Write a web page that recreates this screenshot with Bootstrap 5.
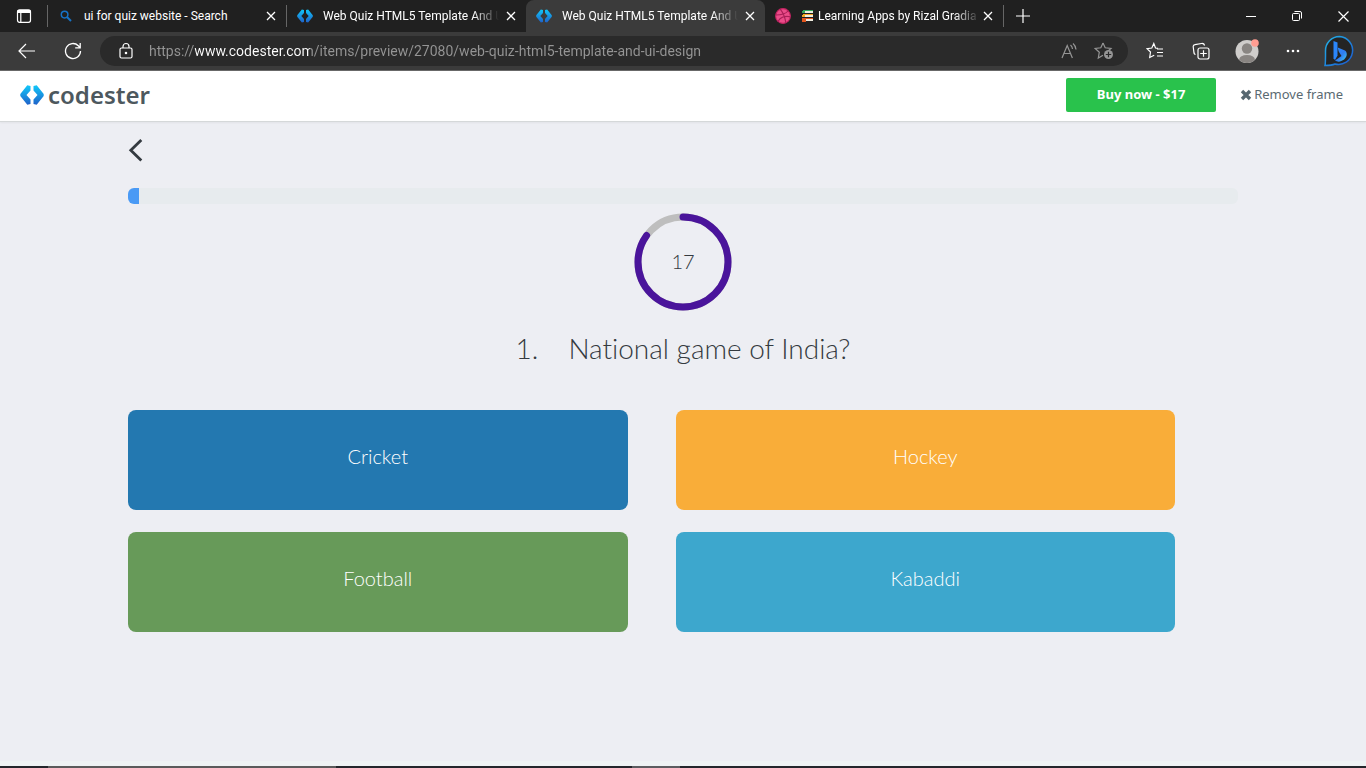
<!DOCTYPE html>
<html lang="en">
<head>
<meta charset="utf-8">
<meta name="viewport" content="width=device-width, initial-scale=1">
<title>Web Quiz HTML5 Template And UI Design</title>
<link href="https://cdn.jsdelivr.net/npm/bootstrap@5.3.0/dist/css/bootstrap.min.css" rel="stylesheet">
<style>
  body { font-family: "Noto Sans", "Open Sans", sans-serif; background: #edeef3; color: #343a40; }
  svg { display: block; flex: none; }
  .plain { background: none; border: 0; padding: 0; color: inherit; flex: none; display: flex; align-items: center; justify-content: center; }

  /* Browser chrome */
  .tabstrip { height: 32px; background: #202020; color: #fff; font-family: Roboto, sans-serif; font-size: 12px; }
  .strip-start { width: 48px; border-right: 1px solid #666; border-image: linear-gradient(transparent 6px, #666 6px 26px, transparent 26px) 1; }
  .browser-tab { flex: 0 1 239px; min-width: 0; padding-left: 10px; padding-right: 7px; position: relative; }
  .browser-tab.divided { border-right: 1px solid #666; border-image: linear-gradient(transparent 6px, #666 6px 26px, transparent 26px) 1; }
  .browser-tab.current { background: #3b3b3b; border-radius: 8px 8px 0 0; }
  .tab-title { flex: 1 1 0; margin-left: 10px; white-space: nowrap; overflow: hidden; color: #fff; text-decoration: none; line-height: 20px; }
  .tab-title.faded { -webkit-mask-image: linear-gradient(90deg, #000 calc(100% - 26px), transparent); mask-image: linear-gradient(90deg, #000 calc(100% - 26px), transparent); }
  .tab-close { width: 16px; height: 16px; }
  .window-btn { width: 46px; height: 32px; }
  .toolbar { height: 39px; background: #3b3b3b; border-bottom: 1px solid #686868; color: #fff; }
  .tool { width: 46px; height: 30px; }
  .address { height: 30px; border-radius: 15px; background: #2a2a2a; padding: 0 12px 0 17px; }
  .url-field { border: 0; outline: 0; padding: 0; margin-left: 14px; min-width: 0; line-height: 20px; font-family: Roboto, sans-serif; font-size: 14px; color: #959595;
    background: linear-gradient(90deg, #959595 46px, #fff 46px 161px, #959595 161px);
    -webkit-background-clip: text; background-clip: text; -webkit-text-fill-color: transparent; }

  /* Preview bar */
  .preview-bar { height: 51px; background: #fff; border-bottom: 1px solid #d5d8d9; box-shadow: 0 1px 2px rgba(0,0,0,.05); padding: 0 23px 3px 20px; }
  .brand-name { font-family: "Noto Sans", sans-serif; font-weight: 600; font-size: 24px; line-height: 30px; color: #4d585e; }
  .buy-btn { width: 150px; height: 34px; padding: 0; border: 0; border-radius: 2px; background: #29c24c; color: #fff; font-size: 13px; font-weight: 700; }
  .remove-link { font-size: 13px; color: #5b6a72; text-decoration: none; gap: 2px; }

  /* Quiz */
  .quiz { --bs-gutter-x: 30px; font-family: Lato, sans-serif; font-weight: 300; font-variant-ligatures: none; padding-top: 12px; }
  .quiz-progress { height: 16px; border-radius: 6px; background: #e7ebee; margin-top: 22px; }
  .quiz-progress .progress-bar { background: #4a9af5; }
  .timer { width: 98px; height: 98px; margin-top: 9px; font-size: 20px; }
  .timer-value { position: absolute; inset: 0 0 2px; }
  .question { font-size: 28px; line-height: 34px; font-weight: 300; margin: 20px 0 45px; gap: 30px; }
  .answers { display: grid; grid-template-columns: 1fr 1fr; gap: 22px 48px; padding-right: 63px; }
  .answer { height: 100px; border: 0; border-radius: 8px; color: #fff; font-size: 20px; font-weight: 300; padding: 0 0 8px; }
  .a-blue { background: #2378b0; } .a-orange { background: #f9ad39; }
  .a-green { background: #679a59; } .a-cyan { background: #3da7cd; }

  /* Page end and the sliver of the taskbar */
  .page-end { height: 5px; background: #eff3f4; }
  .task-edge { height: 2px; background: #24262b; }
  .task-search { width: 288px; margin-left: 48px; background: #5b5b5b; }
  .task-active { width: 48px; margin-left: 296px; background: #5c5d60; }
</style>
</head>
<body class="d-flex flex-column min-vh-100">
<svg width="0" height="0" class="position-absolute" aria-hidden="true">
  <defs>
    <linearGradient id="brand" x1="0" y1="0" x2="0" y2="1"><stop offset="0" stop-color="#10c8fa"/><stop offset="1" stop-color="#1f62c9"/></linearGradient>
    <linearGradient id="ring" x1="0" y1="0" x2="1" y2="1"><stop offset="0" stop-color="#22b5e8"/><stop offset="1" stop-color="#1b57cf"/></linearGradient>
    <linearGradient id="bee" x1="0" y1="0" x2="1" y2="1"><stop offset="0" stop-color="#2d8cff"/><stop offset=".55" stop-color="#2f7cf0"/><stop offset="1" stop-color="#41d3ee"/></linearGradient>
    <symbol id="brandmark" viewBox="0 0 24 20"><path fill="url(#brand)" d="M7.300 0.300L10.500 1V5.500L6.500 10 10.500 14.500V19L7.300 19.700 0.300 11V9ZM16.700 0.300L13.500 1V5.500L17.500 10 13.500 14.500V19L16.700 19.700 23.700 11V9Z"/></symbol>
    <symbol id="cross" viewBox="0 0 16 16"><path d="M4 4l8 8M12 4l-8 8" stroke="#fff" stroke-width="1.300" fill="none"/></symbol>
  </defs>
</svg>

<header>
  <div class="tabstrip d-flex align-items-stretch">
    <div class="strip-start d-flex align-items-center justify-content-center">
      <button class="plain" aria-label="Tab actions"><svg width="16" height="16" viewBox="0 0 16 16" fill="none" stroke="#fff" stroke-width="1.200"><rect x="1.500" y="1.800" width="13" height="12.500" rx="2"/><path d="M1.500 3.500h13" stroke-width="3"/><path d="M4.800 5v9"/></svg></button>
    </div>
    <div class="browser-tab divided d-flex align-items-center">
      <svg width="16" height="12" viewBox="-2 0 16 12" fill="none" stroke="#1673c7" stroke-width="1.500"><circle cx="4.600" cy="4.600" r="3.300"/><path d="M7 7l4 4" stroke-width="1.900"/></svg>
      <a class="tab-title" href="#">ui for quiz website - Search</a>
      <button class="plain tab-close" aria-label="Close tab"><svg width="16" height="16"><use href="#cross"/></svg></button>
    </div>
    <div class="browser-tab d-flex align-items-center">
      <svg width="16" height="14"><use href="#brandmark"/></svg>
      <a class="tab-title faded" href="#">Web Quiz HTML5 Template And U</a>
      <button class="plain tab-close ms-1" aria-label="Close tab"><svg width="16" height="16"><use href="#cross"/></svg></button>
    </div>
    <div class="browser-tab current d-flex align-items-center">
      <svg width="16" height="14"><use href="#brandmark"/></svg>
      <a class="tab-title faded" href="#" aria-current="page">Web Quiz HTML5 Template And U</a>
      <button class="plain tab-close ms-1" aria-label="Close tab"><svg width="16" height="16"><use href="#cross"/></svg></button>
    </div>
    <div class="browser-tab divided d-flex align-items-center">
      <svg width="16" height="16" viewBox="0 0 16 16" fill="none" stroke="#a91e57" stroke-width="1.100"><circle cx="8" cy="8" r="7.400" fill="#ea4c89" stroke="#c32361"/><path d="M5.200 1.200C8 4.600 10 9 10.800 14.800M.8 7C6 7 10.500 6 13 3M3 13.400C5 9.500 10 7.400 15.200 8.800"/></svg>
      <a class="tab-title faded d-flex align-items-center" href="#"><svg class="me-1" width="13" height="12" viewBox="-1 0 13 12"><path fill="#f1eee0" d="M1 1h10v2H1zM1 5h10v2H1zM1 9h10v2H1z"/><path fill="#35a85a" d="M1 0h10v1H1zM0 1h3v2H0z"/><path fill="#f6a623" d="M1 4h10v1H1zM0 5h3v2H0z"/><path fill="#e2571f" d="M0 8h11v1H0zM0 9h4v3H0z"/></svg>Learning Apps by Rizal Gradia</a>
      <button class="plain tab-close" aria-label="Close tab"><svg width="16" height="16"><use href="#cross"/></svg></button>
    </div>
    <button class="plain ms-2 ps-1" aria-label="New tab"><svg width="14" height="14" viewBox="0 0 14 14"><path d="M7 0v14M0 7h14" stroke="#fff" stroke-width="1.200"/></svg></button>
    <div class="ms-auto d-flex">
      <button class="plain window-btn" aria-label="Minimize"><svg width="10" height="10"><path d="M0 5.500h10" stroke="#fff"/></svg></button>
      <button class="plain window-btn" aria-label="Restore"><svg width="10" height="10" viewBox="0 0 10 10" fill="none" stroke="#fff"><rect x=".5" y="2.500" width="7" height="7" rx="1"/><path d="M2.500.5H8Q9.500.5 9.500 2v5.500"/></svg></button>
      <button class="plain window-btn" aria-label="Close"><svg width="11" height="11"><path d="M.5.5l10 10M10.500.5l-10 10" stroke="#fff" stroke-width="1.200"/></svg></button>
    </div>
  </div>

  <div class="toolbar d-flex align-items-center">
    <button class="plain tool ms-1" aria-label="Back"><svg width="18" height="16" viewBox="0 0 18 16" fill="none" stroke="#fff" stroke-width="1.200"><path d="M17 8H1M8 1L1 8l7 7"/></svg></button>
    <button class="plain tool" aria-label="Refresh"><svg width="18" height="18" viewBox="0 0 18 18" fill="none" stroke="#fff" stroke-width="1.300"><path d="M16.500 9A7.500 7.500 0 1 1 14.300 3.700L16 5.500M16.200 1v4.800h-5"/></svg></button>
    <div class="address d-flex align-items-center flex-grow-1 mx-1">
      <svg width="18" height="18" viewBox="0 0 18 18" fill="none" stroke="#fff" stroke-width="1.200"><rect x="3" y="6" width="12" height="10" rx="1.500"/><path d="M6 6V4.500a3 3 0 0 1 6 0V6"/><circle cx="9" cy="11" r=".7" fill="#fff"/></svg>
      <input class="url-field flex-grow-1" type="text" aria-label="Address" value="https://www.codester.com/items/preview/27080/web-quiz-html5-template-and-ui-design">
      <button class="plain" aria-label="Read aloud"><svg width="18" height="18" viewBox="0 0 18 18" fill="none" stroke="#959595" stroke-width="1.200"><path d="M2 16L7.200 3.500 12.400 16M3.800 11.500h6.800M10.500 3a6 6 0 0 1 2 4M13 1.500a8.500 8.500 0 0 1 3 6"/></svg></button>
      <button class="plain ms-3" aria-label="Add to favorites"><svg width="22" height="20" viewBox="0 0 22 20" fill="none" stroke="#959595" stroke-width="1.200"><path d="M9 2L11.200 6.800 17 7.500 14 10M9 2L6.800 6.800 1.200 7.500 5.300 11.200 4.300 17 9 14.200"/><circle cx="14.500" cy="13.500" r="4.500" fill="#959595" stroke="none"/><path d="M14.500 10.800v5.400M11.800 13.500h5.400" stroke="#2a2a2a"/></svg></button>
    </div>
    <button class="plain tool" aria-label="Favorites"><svg width="18" height="18" viewBox="0 0 18 18" fill="none" stroke="#fff" stroke-width="1.200"><path d="M12 6.300L9.500 6 7.800 1.500 5.800 6 1 6.700 4.500 10 3.700 15.500 8.200 13.200M11 7h6M11 10.500h6M11 14h6"/></svg></button>
    <button class="plain tool" aria-label="Collections"><svg width="18" height="18" viewBox="0 0 18 18" fill="none" stroke="#fff" stroke-width="1.200"><path d="M3.500 12.500A2 2 0 0 1 2 11L1.200 4.800A2 2 0 0 1 3 2.600L9.500 1.500Q12 1.200 12.600 3.500"/><rect x="6" y="6" width="11" height="11" rx="2"/><path d="M11.500 8.200v6.600M8.200 11.500h6.600"/></svg></button>
    <button class="plain tool" aria-label="Profile"><svg width="24" height="24" viewBox="0 0 24 24"><circle cx="12" cy="12.500" r="11.500" fill="#cfcdcb"/><circle cx="12" cy="9.500" r="5.200" fill="#898582"/><path d="M4 20.500Q5 16 12 16t8 4.500Q17 24 12 24T4 20.500" fill="#898582"/><circle cx="20" cy="4" r="3.800" fill="#ff9d92"/></svg></button>
    <button class="plain tool" aria-label="Settings and more"><svg width="14" height="4" fill="#fff"><circle cx="2" cy="2" r="1.300"/><circle cx="7" cy="2" r="1.300"/><circle cx="12" cy="2" r="1.300"/></svg></button>
    <button class="plain tool me-1" aria-label="Bing chat"><svg width="32" height="32" viewBox="0 0 32 32"><path d="M16.500 1.500A14 14 0 1 1 12 29Q9 30.500 2 30.500 2.600 28 2.500 16A14.200 14.200 0 0 1 16.500 1.500Z" fill="#242424" stroke="url(#ring)" stroke-width="1.500"/><path d="M10.500 6l4 1.500V20.500l-2.500 4.500-1.500-1.500Z" fill="#2b86fb"/><path d="M12 25.500l6.500-4.500-2.800-4.500-1-4L22 15.500Q24.500 17.500 23.500 21 22 25 17 26.500 14 27 12 25.500Z" fill="url(#bee)"/></svg></button>
  </div>

  <nav class="preview-bar d-flex align-items-center" aria-label="Preview">
    <a class="d-flex align-items-center text-decoration-none gap-1" href="#"><svg width="24" height="20"><use href="#brandmark"/></svg><span class="brand-name">codester</span></a>
    <div class="ms-auto d-flex align-items-center gap-4">
      <button class="btn buy-btn" type="button">Buy now - $17</button>
      <a class="remove-link d-flex align-items-center" href="#"><svg width="12" height="12" viewBox="0 0 12 12"><path d="M2 2l8 8M10 2l-8 8" stroke="#566770" stroke-width="3.400"/></svg>Remove frame</a>
    </div>
  </nav>
</header>

<main class="container quiz flex-grow-1">
  <button class="plain" type="button" aria-label="Back to quizzes"><svg width="16" height="32" viewBox="0 0 16 32"><path d="M13.300 6L2.800 16.300 13.300 26.600" fill="none" stroke="#343a40" stroke-width="2.800"/></svg></button>
  <div class="progress quiz-progress" role="progressbar" aria-label="Quiz progress" aria-valuenow="1" aria-valuemin="0" aria-valuemax="100"><div class="progress-bar" style="width: 1%"></div></div>
  <div class="timer position-relative mx-auto">
    <svg width="98" height="98" viewBox="0 0 98 98" fill="none" stroke-width="7"><circle cx="49" cy="49" r="45" stroke="#bebebe"/><circle cx="49" cy="49" r="45" stroke="#4a149b" stroke-linecap="round" pathLength="100" stroke-dasharray="85 100" transform="rotate(-90 49 49)"/></svg>
    <div class="timer-value d-flex align-items-center justify-content-center">17</div>
  </div>
  <h1 class="question d-flex justify-content-center"><span>1.</span><span>National game of India?</span></h1>
  <div class="answers">
    <button class="answer a-blue" type="button">Cricket</button>
    <button class="answer a-orange" type="button">Hockey</button>
    <button class="answer a-green" type="button">Football</button>
    <button class="answer a-cyan" type="button">Kabaddi</button>
  </div>
</main>

<footer>
  <div class="page-end"></div>
  <div class="task-edge d-flex"><div class="task-search"></div><div class="task-active"></div></div>
</footer>
<script src="https://cdn.jsdelivr.net/npm/bootstrap@5.3.0/dist/js/bootstrap.bundle.min.js"></script>
</body>
</html>
